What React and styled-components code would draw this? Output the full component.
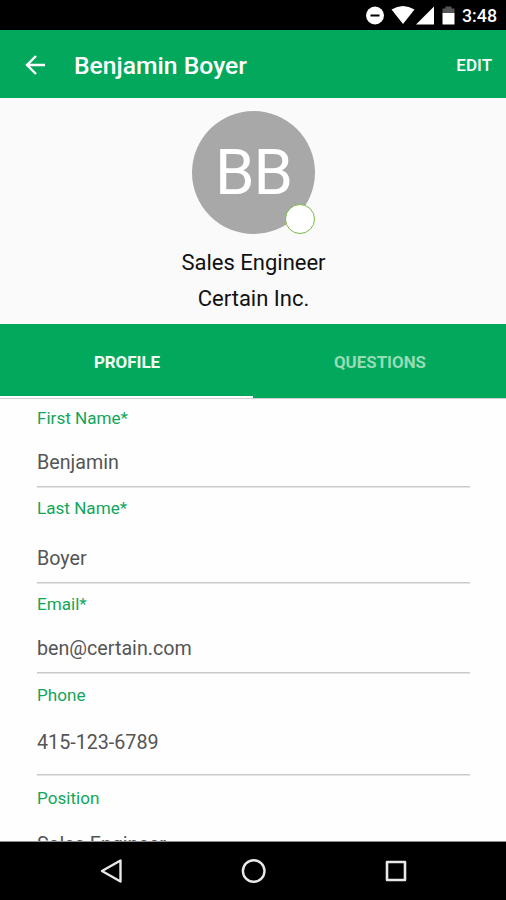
import React from "react";
import styled, { createGlobalStyle } from "styled-components";

const GlobalStyle = createGlobalStyle`
  * {
    box-sizing: border-box;
  }

  body {
    margin: 0;
    background-color: #fff;
    font-family: Roboto, "Liberation Sans", sans-serif;
  }
`;

const Screen = styled.div`
  width: 506px;
  height: 900px;
  display: flex;
  flex-direction: column;
  overflow: hidden;
`;

const StatusBar = styled.div`
  height: 30px;
  flex-shrink: 0;
  display: flex;
  align-items: center;
  justify-content: flex-end;
  padding-right: 9px;
  background-color: #000;
`;

const Clock = styled.span`
  margin-left: 7px;
  padding-top: 2px;
  color: #fff;
  font-size: 17.8px;
  font-weight: 500;
  line-height: 22px;
`;

const AppBar = styled.header`
  height: 68px;
  flex-shrink: 0;
  display: flex;
  align-items: center;
  padding: 1px 14px 0 24px;
  background-color: #02a95d;
  color: #fff;
`;

const Title = styled.h1`
  flex: 1;
  margin: 0 0 0 28px;
  padding-top: 3px;
  font-size: 24.7px;
  font-weight: 500;
  line-height: 30px;
`;

const EditButton = styled.button`
  padding: 1px 0 0;
  border: none;
  background: none;
  color: #fff;
  font-family: inherit;
  font-size: 17px;
  font-weight: 500;
  line-height: 20px;
`;

const Summary = styled.section`
  height: 226px;
  flex-shrink: 0;
  display: flex;
  flex-direction: column;
  align-items: center;
  padding: 13px 0 0 1px;
  background-color: #fafafa;
`;

const Avatar = styled.div`
  position: relative;
  width: 123px;
  height: 123px;
  display: flex;
  align-items: center;
  justify-content: center;
  margin-bottom: 11px;
  border-radius: 50%;
  background-color: #a8a8a8;
  color: #fff;
  font-size: 63.5px;
  line-height: 76px;
  letter-spacing: -1px;
`;

const Badge = styled.span`
  position: absolute;
  right: 0;
  bottom: 0;
  width: 30px;
  height: 30px;
  border: 1.5px solid #7cb84a;
  border-radius: 50%;
  background-color: #fff;
`;

const SummaryLine = styled.div`
  color: #111;
  font-size: 22px;
  line-height: 36px;
`;

const Tabs = styled.nav`
  height: 74px;
  flex-shrink: 0;
  display: flex;
  background-color: #02a95d;
`;

const Tab = styled.button`
  flex: 1;
  padding: 4px 0 0 1px;
  border: none;
  border-bottom: 2px solid ${({ $active }) => ($active ? "#fff" : "#02a95d")};
  background: none;
  color: ${({ $active }) => ($active ? "#f4fff8" : "#96dcb5")};
  font-family: inherit;
  font-size: 16.9px;
  font-weight: 700;
`;

const Form = styled.main`
  flex: 1;
  min-height: 0;
  overflow: hidden;
  padding: 0 36px 0 37px;
  border-top: 1px solid #cfcfcf;
  border-bottom: 1px solid #8c8c8c;
  background-color: #fefefe;
`;

const Field = styled.div`
  height: ${({ $height }) => $height}px;
  padding-top: ${({ $top }) => $top}px;
  border-bottom: 1px solid #c9c9c9;
  box-shadow: 0 1px #e4e4e4;
`;

const Label = styled.div`
  margin-bottom: ${({ $gap }) => $gap}px;
  color: #12a65c;
  font-size: 17.1px;
  line-height: 20px;
`;

const Value = styled.div`
  color: #555;
  font-size: 19.7px;
  line-height: 24px;
`;

const NavBar = styled.footer`
  height: 58px;
  flex-shrink: 0;
  display: flex;
  align-items: center;
  justify-content: space-between;
  padding: 0 98px 0 99px;
  background-color: #000;
`;

const fields = [
  { label: "First Name*", value: "Benjamin", height: 88, top: 9, gap: 23 },
  { label: "Last Name*", value: "Boyer", height: 96, top: 11, gap: 29 },
  { label: "Email*", value: "ben@certain.com", height: 90, top: 11, gap: 23 },
  { label: "Phone", value: "415-123-6789", height: 102, top: 12, gap: 26 },
  { label: "Position", value: "Sales Engineer", height: 100, top: 13, gap: 25 },
];

const StatusIcons = () => (
  <svg width="92" height="30" viewBox="0 0 92 30" fill="#fff">
    <circle cx="12" cy="15.5" r="9" />
    <path d="M7.5 15.5h9" stroke="#000" strokeWidth="2" />
    <path d="M28.5 9.5Q40 2.5 51.5 9.5L40 24Z" />
    <path d="M71 6.5V24.5H53Z" />
    <path d="M79.5 8.5h3v-2h6v2h3v5H79.5Z" fill="#555" />
    <path d="M79.5 13h12v11.5H79.5Z" />
  </svg>
);

const BackArrow = () => (
  <svg width="22" height="22" viewBox="0 0 22 22" fill="none" stroke="#fff" strokeWidth="2.4">
    <path d="M21 11H3M12 2L3 11L12 20" />
  </svg>
);

const App = () => {
  return (
    <>
      <GlobalStyle />
      <Screen>
        <StatusBar>
          <StatusIcons />
          <Clock>3:48</Clock>
        </StatusBar>

        <AppBar>
          <BackArrow />
          <Title>Benjamin Boyer</Title>
          <EditButton>EDIT</EditButton>
        </AppBar>

        <Summary>
          <Avatar>
            BB
            <Badge />
          </Avatar>
          <SummaryLine>Sales Engineer</SummaryLine>
          <SummaryLine>Certain Inc.</SummaryLine>
        </Summary>

        <Tabs>
          <Tab $active>PROFILE</Tab>
          <Tab>QUESTIONS</Tab>
        </Tabs>

        <Form>
          {fields.map(({ label, value, height, top, gap }) => (
            <Field key={label} $height={height} $top={top}>
              <Label $gap={gap}>{label}</Label>
              <Value>{value}</Value>
            </Field>
          ))}
        </Form>

        <NavBar>
          <svg width="25" height="26" viewBox="0 0 25 26" fill="none" stroke="#e8e8e8" strokeWidth="2.4" strokeLinejoin="round">
            <path d="M21.5 2.5V23.5L3 13Z" />
          </svg>
          <svg width="26" height="26" viewBox="0 0 26 26" fill="none" stroke="#e8e8e8" strokeWidth="2.4">
            <circle cx="12.7" cy="13" r="10.8" />
          </svg>
          <svg width="25" height="26" viewBox="0 0 25 26" fill="none" stroke="#e8e8e8" strokeWidth="2.6" strokeLinejoin="round">
            <path d="M4 4h18v18H4Z" />
          </svg>
        </NavBar>
      </Screen>
    </>
  );
};

export default App;
